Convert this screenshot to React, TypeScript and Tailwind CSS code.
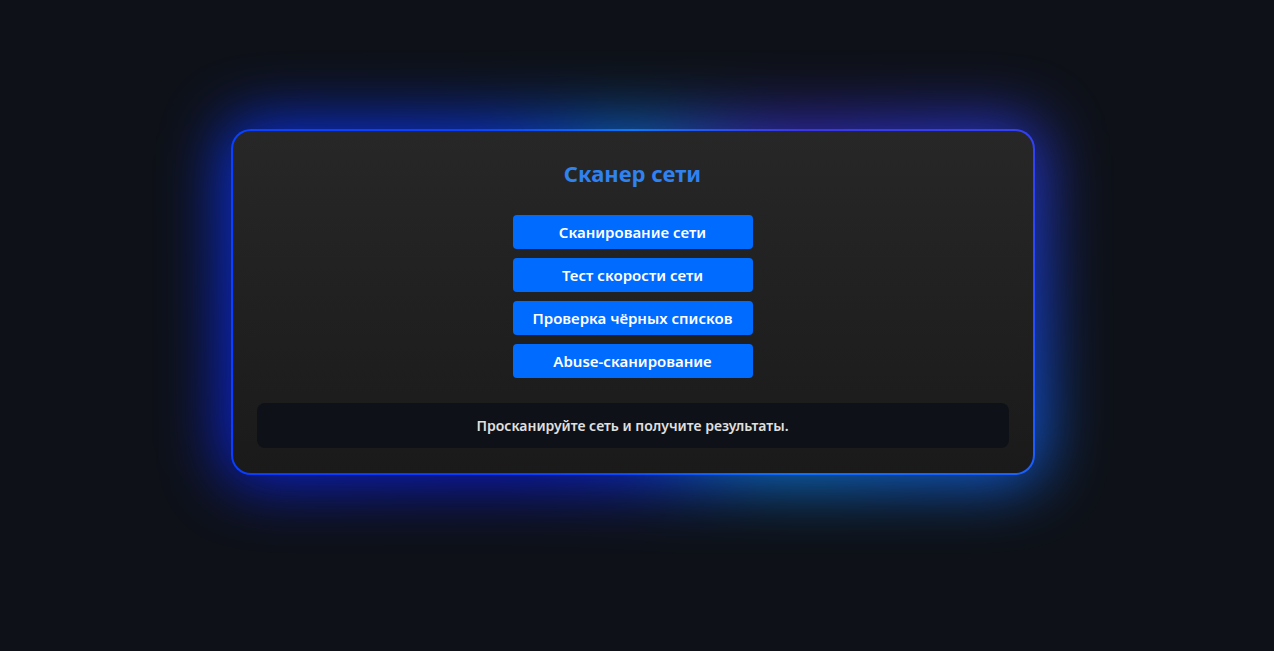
export default function App() {
  const actions = ["Сканирование сети", "Тест скорости сети", "Проверка чёрных списков", "Abuse-сканирование"];

  return (
    <div className="min-h-screen w-full bg-[#0e1117] flex items-start justify-center pt-[129px] font-['Noto_Sans',sans-serif]">
      <div className="relative isolate mr-[9px]">
        {/* glow behind the card */}
        <div className="absolute -inset-[8px] -z-10 rounded-[28px] blur-[32px] opacity-90 bg-[conic-gradient(from_0deg,#0a74d8,#3a2ac8_45deg,#1848f0_90deg,#0a86f0_135deg,#0a2ce8_180deg,#0a1ae0_225deg,#0a2cf0_270deg,#0a3af0_315deg,#0a74d8)]" />
        <div className="relative w-[804px] h-[346px] rounded-[20px] border-2 border-transparent [background:linear-gradient(#272727,#1a1a1a)_padding-box,conic-gradient(from_0deg,#0a78ff,#3a36e8_45deg,#2a4cff_90deg,#0a72ff_135deg,#0a4cff_180deg,#0a3cff_225deg,#0a40ff_270deg,#0a40ff_315deg,#0a78ff)_border-box] px-6 pt-[27px] pb-6 flex flex-col items-center">
          <h1 className="text-[22px] leading-[30px] font-bold text-[#2f82f0]">Сканер сети</h1>
          <div className="mt-[27px] flex flex-col gap-[9px]">
            {actions.map((a) => (
              <button
                key={a}
                className="w-[240px] h-[34px] rounded-[4px] bg-[#006bff] text-white text-[15px] font-semibold"
              >
                {a}
              </button>
            ))}
          </div>
          <div className="mt-[25px] w-full h-[45px] rounded-[8px] bg-[#0e1117] flex items-center justify-center text-[14px] font-semibold text-[#e0e0e0]">
            Просканируйте сеть и получите результаты.
          </div>
        </div>
      </div>
    </div>
  );
}
